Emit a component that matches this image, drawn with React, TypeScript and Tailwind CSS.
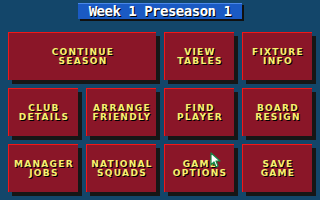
import React from "react";

const Btn = ({ a, b, span }: { a: string; b: string; span?: boolean }) => (
  <div
    className={`h-[48px] bg-[#8a1628] border-t border-l border-[#f01818] shadow-[4px_4px_0_#161616] flex flex-col items-center justify-center text-[#f8f070] font-bold text-[9px] leading-[9px] tracking-[1.3px] ${span ? "col-span-2" : ""}`}
    style={{ fontFamily: '"DejaVu Sans", sans-serif', textShadow: "1px 1px 0 #000" }}
  >
    <span className="block pl-[1px]">{a}</span>
    <span className="block pl-[1px]">{b}</span>
  </div>
);

export default function App() {
  return (
    <div className="relative w-[320px] h-[200px] bg-[#13466a] overflow-hidden">
      <div className="pt-[3px] flex justify-center">
        <div
          className="w-[164px] h-[16px] bg-[#1a5ac4] border-t border-[#4a88e8] shadow-[2px_2px_0_#101010] flex items-center justify-center text-white font-bold text-[14px] tracking-[-0.5px]"
          style={{ fontFamily: '"DejaVu Sans Mono", monospace', textShadow: "1px 1px 0 #000" }}
        >
          Week 1 Preseason 1
        </div>
      </div>
      <div className="mt-[13px] ml-[8px] grid grid-cols-[70px_70px_70px_70px] gap-[8px]">
        <Btn a="CONTINUE" b="SEASON" span />
        <Btn a="VIEW" b="TABLES" />
        <Btn a="FIXTURE" b="INFO" />
        <Btn a="CLUB" b="DETAILS" />
        <Btn a="ARRANGE" b="FRIENDLY" />
        <Btn a="FIND" b="PLAYER" />
        <Btn a="BOARD" b="RESIGN" />
        <Btn a="MANAGER" b="JOBS" />
        <Btn a="NATIONAL" b="SQUADS" />
        <Btn a="GAME" b="OPTIONS" />
        <Btn a="SAVE" b="GAME" />
      </div>
      <svg className="absolute left-[210px] top-[152px]" width="12" height="16" viewBox="0 0 12 16">
        <path d="M1 1 L1 13 L4 10 L6 15 L8 14 L6 9 L10 9 Z" fill="#ffffff" stroke="#168a48" strokeWidth="1.2" strokeLinejoin="round" />
      </svg>
    </div>
  );
}
